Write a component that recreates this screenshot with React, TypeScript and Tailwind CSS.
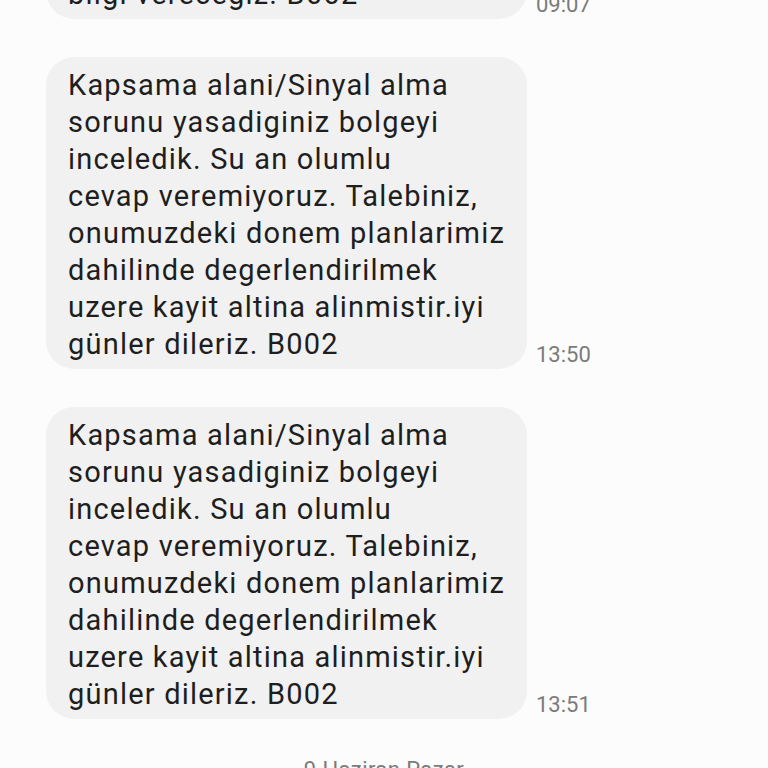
import React from "react";

const msg = [
  "Kapsama alani/Sinyal alma",
  "sorunu yasadiginiz bolgeyi",
  "inceledik. Su an olumlu",
  "cevap veremiyoruz. Talebiniz,",
  "onumuzdeki donem planlarimiz",
  "dahilinde degerlendirilmek",
  "uzere kayit altina alinmistir.iyi",
  "günler dileriz. B002",
];

const first = [
  "Talebiniz ile ilgili inceleme",
  "sonuclandiginda size SMS ile",
  "bilgi verecegiz. B002",
];

function Row({ lines, time, className }: { lines: string[]; time: string; className?: string }) {
  return (
    <div className={"flex flex-row items-end gap-[9px] " + (className ?? "")}>
      <div className="w-[481px] rounded-[28px] bg-[#f1f1f1] pl-[22px] pr-[12px] pt-[10px] pb-[6px] text-[29px] leading-[37px] tracking-[1.2px] text-[#1e1e1e]">
        {lines.map((l, i) => (
          <div key={i} className="whitespace-nowrap">
            {l}
          </div>
        ))}
      </div>
      <div className="mb-[3px] text-[22px] leading-none text-[#7b7b7b]">{time}</div>
    </div>
  );
}

export default function App() {
  return (
    <div
      className="h-[768px] w-[768px] overflow-hidden bg-[#fcfcfc]"
      style={{ fontFamily: "Roboto, 'Noto Sans', sans-serif" }}
    >
      <div className="flex flex-col pl-[46px]">
        <Row lines={first} time="09:07" className="mt-[-108px]" />
        <Row lines={msg} time="13:50" className="mt-[38px]" />
        <Row lines={msg} time="13:51" className="mt-[38px]" />
        <div className="mt-[40px] pr-[46px] text-center text-[22px] leading-none tracking-[0.4px] text-[#7b7b7b]">
          9 Haziran Pazar
        </div>
      </div>
    </div>
  );
}
